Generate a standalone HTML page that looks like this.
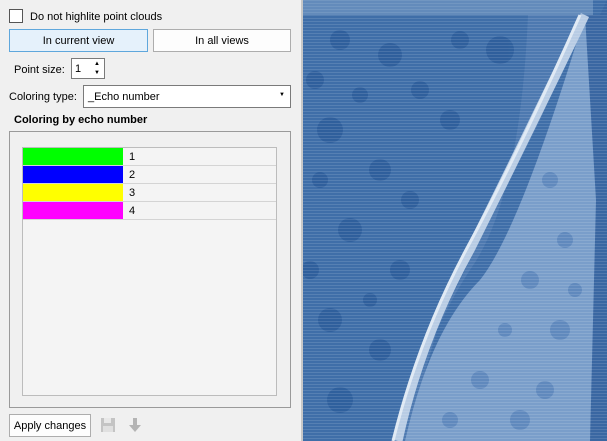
<!DOCTYPE html>
<html><head><style>
*{box-sizing:border-box;margin:0;padding:0}
body{width:607px;height:441px;overflow:hidden;background:#f0f0f0;font-family:"Liberation Sans",sans-serif;font-size:11px;color:#000;position:relative}
.a{position:absolute}
.btn{position:absolute;border:1px solid #adadad;background:#fdfdfd;text-align:center;line-height:22px}
</style></head><body>
<div class="a" style="left:9px;top:9px;width:14px;height:14px;border:1px solid #555;background:#fff"></div>
<div class="a" style="left:30px;top:11px">Do not highlite point clouds</div>
<div class="btn" style="left:9px;top:29px;width:139px;height:23px;background:#e5f1fb;border-color:#5fa7dc">In current view</div>
<div class="btn" style="left:153px;top:29px;width:138px;height:23px">In all views</div>
<div class="a" style="left:14px;top:64px">Point size:</div>
<div class="a" style="left:71px;top:58px;width:34px;height:21px;border:1px solid #7a7a7a;background:#fff;padding:4px 0 0 3px">1<span class="a" style="left:22px;top:1px;font-size:6px;line-height:9px">▲<br>▼</span></div>
<div class="a" style="left:9px;top:91px">Coloring type:</div>
<div class="a" style="left:83px;top:85px;width:208px;height:23px;border:1px solid #7a7a7a;background:#fff;padding:5px 0 0 4px">_Echo number<span class="a" style="right:5px;top:6px;font-size:6px">▼</span></div>
<div class="a" style="left:14px;top:114px;font-weight:bold">Coloring by echo number</div>
<div class="a" style="left:9px;top:131px;width:282px;height:277px;border:1px solid #9a9a9a"></div>
<div class="a" style="left:22px;top:147px;width:255px;height:249px;border:1px solid #bcbcbc;background:#f4f4f4">
<div style="height:18px;border-bottom:1px solid #d4d4d4;display:flex"><div style="width:100px;background:#00ff00"></div><div style="padding:3px 6px">1</div></div>
<div style="height:18px;border-bottom:1px solid #d4d4d4;display:flex"><div style="width:100px;background:#0000ff"></div><div style="padding:3px 6px">2</div></div>
<div style="height:18px;border-bottom:1px solid #d4d4d4;display:flex"><div style="width:100px;background:#ffff00"></div><div style="padding:3px 6px">3</div></div>
<div style="height:18px;border-bottom:1px solid #d4d4d4;display:flex"><div style="width:100px;background:#ff00ff"></div><div style="padding:3px 6px">4</div></div>
</div>
<div class="btn" style="left:9px;top:414px;width:82px;height:23px">Apply changes</div>
<svg class="a" style="left:100px;top:417px" width="16" height="16"><rect x="1" y="1" width="14" height="14" fill="#c4c4c4"/><rect x="4" y="1" width="7" height="5" fill="#e8e8e8"/><rect x="3" y="9" width="10" height="6" fill="#e0e0e0"/></svg>
<svg class="a" style="left:128px;top:417px" width="14" height="16"><rect x="5" y="1" width="4" height="8" fill="#b4b4b4"/><path d="M1 8h12l-6 7z" fill="#b4b4b4"/></svg>
<div class="a" style="left:301px;top:0;width:2px;height:441px;background:#c8c8c8"></div>
<svg class="a" style="left:303px;top:0" width="304" height="441" viewBox="303 0 304 441">
<defs><pattern id="p" width="4" height="3" patternUnits="userSpaceOnUse"><rect width="4" height="1" fill="#fff" opacity=".12"/></pattern></defs>
<rect x="303" y="0" width="304" height="441" fill="#3f6ea8"/>
<path d="M528 15 L585 15 L540 120 L500 200 Q470 260 440 320 L405 441 L395 441 Q430 330 470 270 Q520 200 528 15Z" fill="#4d79b0"/>
<path d="M585 15 L598 120 L596 441 L405 441 Q430 330 480 280 Q520 230 585 15Z" fill="#7a9eca"/>
<path d="M585 15 L600 15 L607 0 L607 441 L590 441 L596 200Z" fill="#3a67a2"/>
<path d="M585 15 Q520 150 470 250 Q420 340 398 441" stroke="#b8cce4" stroke-width="9" fill="none"/>
<path d="M580 15 Q520 150 466 250 Q418 340 393 441" stroke="#dfe9f4" stroke-width="3" fill="none"/>
<g fill="#2c5c9a" opacity=".8">
<circle cx="340" cy="40" r="10"/><circle cx="390" cy="55" r="12"/><circle cx="420" cy="90" r="9"/><circle cx="330" cy="130" r="13"/><circle cx="380" cy="170" r="11"/><circle cx="450" cy="120" r="10"/><circle cx="500" cy="50" r="14"/><circle cx="350" cy="230" r="12"/><circle cx="400" cy="270" r="10"/><circle cx="330" cy="320" r="12"/><circle cx="380" cy="350" r="11"/><circle cx="340" cy="400" r="13"/><circle cx="410" cy="200" r="9"/><circle cx="460" cy="40" r="9"/><circle cx="315" cy="80" r="9"/><circle cx="360" cy="95" r="8"/><circle cx="310" cy="270" r="9"/><circle cx="370" cy="300" r="7"/><circle cx="320" cy="180" r="8"/>
</g>
<g fill="#5a84ba" opacity=".8">
<circle cx="550" cy="180" r="8"/><circle cx="530" cy="280" r="9"/><circle cx="560" cy="330" r="10"/><circle cx="480" cy="380" r="9"/><circle cx="520" cy="420" r="10"/><circle cx="565" cy="240" r="8"/><circle cx="450" cy="420" r="8"/><circle cx="545" cy="390" r="9"/><circle cx="575" cy="290" r="7"/><circle cx="505" cy="330" r="7"/>
</g>
<rect x="303" y="0" width="304" height="441" fill="url(#p)"/>
<rect x="303" y="0" width="290" height="15" fill="#9ab6d8" opacity=".4"/>
</svg>
</body></html>
